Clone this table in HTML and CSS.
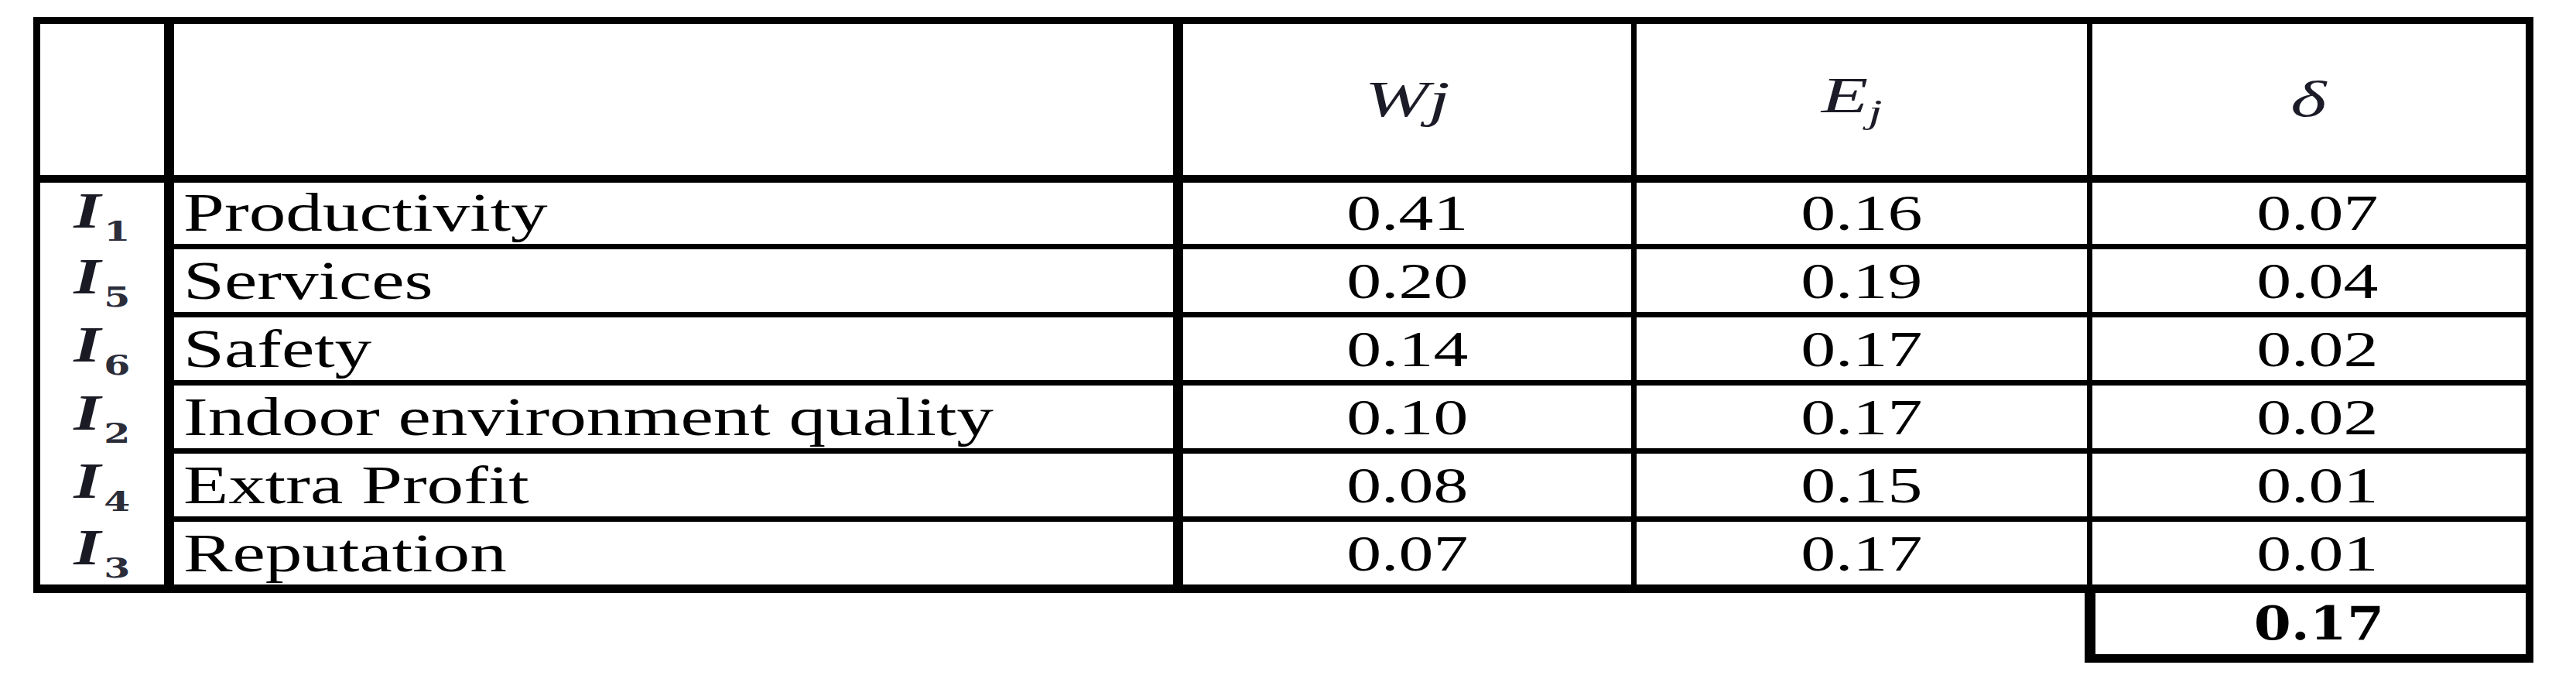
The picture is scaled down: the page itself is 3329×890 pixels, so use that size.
FILE: index.html
```html
<!DOCTYPE html>
<html lang="en">
<head>
    <meta charset="UTF-8">
    <title>Indicator weights</title>
    <link rel="stylesheet" href="styles.css">
</head>
<body>
    <table class="score-table">
        <colgroup>
            <col class="col-idx">
            <col class="col-name">
            <col class="col-num">
            <col class="col-num">
            <col class="col-last">
        </colgroup>
        <tr class="head">
            <td class="idx"></td>
            <td class="name"></td>
            <td class="num"><span class="math">W<i>j</i></span></td>
            <td class="num pull"><span class="math">E<sub>j</sub></span></td>
            <td class="num last"><span class="math">δ</span></td>
        </tr>
        <tr class="row">
            <td class="idx"><span class="ind"><i>I</i><sub>1</sub></span></td>
            <td class="name"><span class="label">Productivity</span></td>
            <td class="num"><span class="val">0.41</span></td>
            <td class="num"><span class="val">0.16</span></td>
            <td class="num last shift"><span class="val">0.07</span></td>
        </tr>
        <tr class="row">
            <td class="idx"><span class="ind"><i>I</i><sub>5</sub></span></td>
            <td class="name"><span class="label">Services</span></td>
            <td class="num"><span class="val">0.20</span></td>
            <td class="num"><span class="val">0.19</span></td>
            <td class="num last shift"><span class="val">0.04</span></td>
        </tr>
        <tr class="row">
            <td class="idx"><span class="ind"><i>I</i><sub>6</sub></span></td>
            <td class="name"><span class="label">Safety</span></td>
            <td class="num"><span class="val">0.14</span></td>
            <td class="num"><span class="val">0.17</span></td>
            <td class="num last shift"><span class="val">0.02</span></td>
        </tr>
        <tr class="row">
            <td class="idx"><span class="ind"><i>I</i><sub>2</sub></span></td>
            <td class="name"><span class="label">Indoor environment quality</span></td>
            <td class="num"><span class="val">0.10</span></td>
            <td class="num"><span class="val">0.17</span></td>
            <td class="num last shift"><span class="val">0.02</span></td>
        </tr>
        <tr class="row">
            <td class="idx"><span class="ind"><i>I</i><sub>4</sub></span></td>
            <td class="name"><span class="label">Extra Profit</span></td>
            <td class="num"><span class="val">0.08</span></td>
            <td class="num"><span class="val">0.15</span></td>
            <td class="num last shift"><span class="val">0.01</span></td>
        </tr>
        <tr class="row row-end">
            <td class="idx"><span class="ind"><i>I</i><sub>3</sub></span></td>
            <td class="name"><span class="label">Reputation</span></td>
            <td class="num"><span class="val">0.07</span></td>
            <td class="num"><span class="val">0.17</span></td>
            <td class="num last shift"><span class="val">0.01</span></td>
        </tr>
        <tr class="total">
            <td></td>
            <td></td>
            <td></td>
            <td></td>
            <td class="sum shift"><span class="val-bold">0.17</span></td>
        </tr>
    </table>
</body>
</html>
```

FILE: styles.css
```css
body {
    margin: 0;
    padding: 22px 0 0 43px;
    background-color: #fff;
    color: #000;
    font-family: "Liberation Serif", "Times New Roman", serif;
}

.score-table {
    border-collapse: collapse;
    table-layout: fixed;
    width: 3230px;
}

.col-idx { width: 171px; }
.col-name { width: 1304px; }
.col-num { width: 589px; }
.col-last { width: 568px; }

.score-table td {
    padding: 0;
    text-align: center;
    vertical-align: middle;
    line-height: 1;
}

/* lignes verticales */
.idx {
    border-left: 9px solid #000;
    border-right: 13px solid #000;
}

.name {
    border-right: 13px solid #000;
    text-align: left !important;
    padding-left: 12px !important;
}

.num {
    border-right: 7px solid #000;
}

.num.last {
    border-right: 10px solid #000;
}

.score-table td.shift {
    padding-left: 22px;
}

.score-table td.pull {
    padding-right: 26px;
}

/* lignes horizontales */
.head {
    height: 204px;
}

.head td {
    border-top: 9px solid #000;
    border-bottom: 10px solid #000;
}

.row {
    height: 88px;
}

.row td.name, .row td.num {
    border-bottom: 7px solid #000;
}

.row-end {
    height: 90px;
}

.row-end td {
    border-bottom: 11px solid #000 !important;
}

.total {
    height: 90px;
}

.total .sum {
    border-left: 14px solid #000;
    border-right: 10px solid #000;
    border-bottom: 11px solid #000;
}

/* l'image d'origine est étirée en largeur */
.label, .val, .val-bold, .math, .ind {
    display: inline-block;
    transform: scaleX(1.36);
}

.label {
    font-size: 70px;
    transform-origin: left center;
}

.val {
    font-size: 66px;
}

.val-bold {
    font-family: "DejaVu Serif", serif;
    font-weight: bold;
    font-size: 59px;
    transform: scaleX(1.17);
}

.math {
    font-size: 66px;
    font-style: italic;
    color: #1c1c28;
    transform: scaleX(1.5);
}

.math sub {
    font-size: 44px;
    vertical-align: -14px;
}

.ind {
    font-size: 66px;
    font-weight: bold;
    color: #1a1a24;
}

.ind sub {
    font-family: "DejaVu Serif", serif;
    font-weight: bold;
    font-size: 36px;
    color: #2b2d3a;
    vertical-align: -17px;
    margin-left: 3px;
}
```
